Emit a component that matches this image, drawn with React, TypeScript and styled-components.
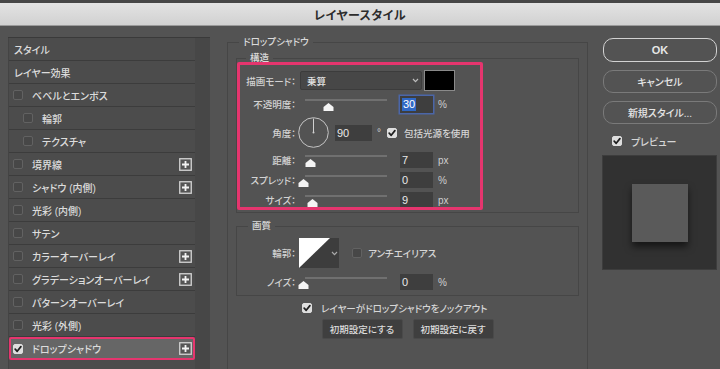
import React from "react";
import styled, { createGlobalStyle } from "styled-components";

const GlobalStyle = createGlobalStyle`
  html, body { margin: 0; padding: 0; background: #535353; }
  body {
    width: 720px; height: 369px; overflow: hidden;
    font-family: "Liberation Sans", "Noto Sans CJK JP", sans-serif;
    font-feature-settings: "palt";
  }
  * { box-sizing: border-box; }
`;

const Window = styled.div`
  width: 720px;
  height: 369px;
  display: flex;
  flex-direction: column;
  background: #535353;
  color: #d6d6d6;
  font-size: 9.5px;
  font-weight: 500;
`;

const TitleBar = styled.div`
  flex: none;
  height: 26px;
  border-top: 3px solid #474747;
  border-bottom: 1px solid #9a9a9a;
  background: linear-gradient(#e3e3e3, #d1d1d1);
  display: flex;
  align-items: center;
  justify-content: center;
  color: #2c2c2c;
  font-size: 12px;
  font-weight: 700;
  letter-spacing: 0.4px;
`;

const Body = styled.div`
  flex: 1;
  display: flex;
  padding: 11px 3px 0 8px;
  overflow: hidden;
`;

/* ---------- left effect list ---------- */

const LeftPanel = styled.div`
  width: 202px;
  flex: none;
  display: flex;
  border-top: 1px solid #3a3a3a;
`;

const List = styled.div`
  flex: 1;
  background: #4c4c4c;
  border-left: 1px solid #444;
`;

const Gutter = styled.div`
  width: 15px;
  background: #474747;
`;

const EffectRow = styled.div<{ $indent: number; $selected?: boolean }>`
  height: 23px;
  display: flex;
  align-items: center;
  gap: 9px;
  padding: 0 3px 0 ${(p) => p.$indent}px;
  border-bottom: 1px solid #3c3c3c;
  color: #dcdcdc;
  font-size: 10px;
  ${(p) =>
    p.$selected &&
    `
    background: #666;
    border: 2px solid #e5356e;
    border-radius: 2px;
    padding-left: ${p.$indent - 2}px;
    padding-right: 1px;
  `}
`;

const EffectLabel = styled.span`
  flex: 1;
  white-space: nowrap;
`;

const CheckBox = styled.span<{ $on?: boolean }>`
  width: 10px;
  height: 10px;
  flex: none;
  border-radius: 2px;
  display: inline-flex;
  align-items: center;
  justify-content: center;
  background: ${(p) => (p.$on ? "#dedede" : "#474747")};
  border: 1px solid ${(p) => (p.$on ? "#dedede" : "#626262")};
`;

const Check = ({ on }: { on?: boolean }) => (
  <CheckBox $on={on}>
    {on && (
      <svg width="8" height="8" viewBox="0 0 8 8">
        <path
          d="M1.2 4.2 L3.2 6.3 L6.9 1.6"
          fill="none"
          stroke="#1e1e1e"
          strokeWidth="1.7"
          strokeLinecap="round"
          strokeLinejoin="round"
        />
      </svg>
    )}
  </CheckBox>
);

const PlusIcon = () => (
  <svg width="13" height="13" viewBox="0 0 13 13">
    <rect x="0.75" y="0.75" width="11.5" height="11.5" fill="#555" stroke="#d4d4d4" strokeWidth="1.3" />
    <path d="M6.5 3 V10 M3 6.5 H10" stroke="#f2f2f2" strokeWidth="1.8" />
  </svg>
);

type Effect = {
  label: string;
  box?: boolean;
  indent?: boolean;
  plus?: boolean;
  selected?: boolean;
};

const effects: Effect[] = [
  { label: "スタイル" },
  { label: "レイヤー効果" },
  { label: "ベベルとエンボス", box: true },
  { label: "輪郭", box: true, indent: true },
  { label: "テクスチャ", box: true, indent: true },
  { label: "境界線", box: true, plus: true },
  { label: "シャドウ (内側)", box: true, plus: true },
  { label: "光彩 (内側)", box: true },
  { label: "サテン", box: true },
  { label: "カラーオーバーレイ", box: true, plus: true },
  { label: "グラデーションオーバーレイ", box: true, plus: true },
  { label: "パターンオーバーレイ", box: true },
  { label: "光彩 (外側)", box: true },
  { label: "ドロップシャドウ", box: true, plus: true, selected: true },
];

/* ---------- middle settings ---------- */

const Middle = styled.div`
  width: 361px;
  flex: none;
  margin: -2px 0 0 17px;
  display: flex;
  flex-direction: column;
`;

const Group = styled.fieldset<{ $open?: boolean; $mt?: number }>`
  margin: ${(p) => p.$mt ?? 0}px 0 0 0;
  padding: 0;
  min-width: 0;
  border: 1px solid #464646;
  ${(p) => p.$open && "border-bottom: none; flex: 1;"}
`;

const Legend = styled.legend<{ $indent: number }>`
  margin-left: ${(p) => p.$indent}px;
  padding: 0 4px;
  line-height: 14px;
  font-size: 9.5px;
  color: #dadada;
`;

const GroupBody = styled.div`
  padding: 2px 8px 0;
  display: flex;
  flex-direction: column;
`;

const SectionBody = styled.div<{ $pt: number; $pb: number }>`
  position: relative;
  display: flex;
  flex-direction: column;
  padding: ${(p) => p.$pt}px 0 ${(p) => p.$pb}px;
`;

const Highlight = styled.div`
  position: absolute;
  top: -3px;
  left: 0;
  width: 246px;
  height: 148px;
  border: 3px solid #e5356e;
  border-radius: 2px;
  pointer-events: none;
`;

const FormRow = styled.div<{ $mt: number; $h: number }>`
  display: flex;
  align-items: center;
  margin-top: ${(p) => p.$mt}px;
  height: ${(p) => p.$h}px;
`;

const FieldLabel = styled.span`
  width: 59px;
  flex: none;
  text-align: right;
  white-space: nowrap;
  color: #d2d2d2;
`;

const Select = styled.div`
  margin-left: 4px;
  width: 122px;
  height: 19px;
  background: #474747;
  border: 1px solid #3c3c3c;
  border-radius: 2px;
  display: flex;
  align-items: center;
  justify-content: space-between;
  padding: 0 2px 0 6px;
  color: #e2e2e2;
`;

const ColorSwatch = styled.div`
  margin-left: 2px;
  width: 31px;
  height: 21px;
  background: #000;
  border: 1px solid #8a8a8a;
`;

const SliderBox = styled.div`
  position: relative;
  width: 82px;
  height: 16px;
  margin-left: 9px;
  flex: none;
`;

const Track = styled.div`
  position: absolute;
  top: 3px;
  left: 0;
  right: 0;
  height: 2px;
  background: #707070;
`;

const ThumbWrap = styled.div`
  position: absolute;
  top: 7px;
  width: 11px;
  height: 8px;
  line-height: 0;
`;

const Slider = ({ at }: { at: number }) => (
  <SliderBox>
    <Track />
    <ThumbWrap style={{ left: at - 5.5 }}>
      <svg width="11" height="8" viewBox="0 0 11 8">
        <polygon points="5.5,0 10.5,4 10.5,8 0.5,8 0.5,4" fill="#f4f4f4" />
      </svg>
    </ThumbWrap>
  </SliderBox>
);

const NumField = styled.div<{ $ml: number; $w: number; $focus?: boolean }>`
  margin-left: ${(p) => p.$ml}px;
  width: ${(p) => p.$w}px;
  height: ${(p) => (p.$focus ? 17 : 16)}px;
  flex: none;
  background: #3e3e3e;
  display: flex;
  align-items: center;
  padding-left: 2px;
  font-size: 11px;
  font-weight: 400;
  color: #e8e8e8;
  ${(p) => p.$focus && "box-shadow: 0 0 0 1.5px #4b66a8;"}
`;

const Selected = styled.span`
  background: #3068c4;
  color: #fff;
  padding: 0 1px;
  line-height: 13px;
`;

const Unit = styled.span<{ $ml?: number }>`
  margin-left: ${(p) => p.$ml ?? 5}px;
  color: #cfcfcf;
  font-size: 10px;
  font-weight: 400;
`;

const Dial = styled.div`
  margin-left: 2px;
  width: 31px;
  height: 31px;
  flex: none;
  line-height: 0;
`;

const InlineText = styled.span<{ $ml: number }>`
  margin-left: ${(p) => p.$ml}px;
  white-space: nowrap;
  color: #d6d6d6;
`;

const Contour = styled.div`
  margin-left: 3px;
  display: flex;
  height: 30px;
  line-height: 0;
`;

const ContourArrow = styled.div`
  width: 9px;
  background: #3d3d3d;
  display: flex;
  align-items: center;
  justify-content: center;
`;

const CheckSlot = styled.span<{ $ml: number }>`
  margin-left: ${(p) => p.$ml}px;
  display: inline-flex;
`;

const KnockoutRow = styled.div`
  margin-top: 5px;
  height: 14px;
  display: flex;
  align-items: center;
  gap: 9px;
  padding-left: 66px;
  white-space: nowrap;
`;

const ButtonRow = styled.div`
  margin-top: 4px;
  display: flex;
  justify-content: center;
  gap: 10px;
`;

const FlatButton = styled.div`
  width: 81px;
  height: 20px;
  background: #3f3f3f;
  border: 1px solid #4a4a4a;
  border-radius: 2px;
  display: flex;
  align-items: center;
  justify-content: center;
  color: #dcdcdc;
`;

const Chevron = ({ color = "#bdbdbd" }: { color?: string }) => (
  <svg width="7" height="5" viewBox="0 0 7 5">
    <path d="M1 1 L3.5 3.6 L6 1" fill="none" stroke={color} strokeWidth="1.2" />
  </svg>
);

/* ---------- right column ---------- */

const Side = styled.div`
  width: 115px;
  flex: none;
  margin-left: 14px;
  display: flex;
  flex-direction: column;
`;

const PillButton = styled.div<{ $primary?: boolean; $mt: number }>`
  margin: ${(p) => p.$mt}px 0 0 1px;
  height: ${(p) => (p.$primary ? 24 : 23)}px;
  border-radius: 10px;
  border: ${(p) => (p.$primary ? "1.5px solid #d2d2d2" : "1px solid #7a7a7a")};
  display: flex;
  align-items: center;
  justify-content: center;
  color: #e6e6e6;
  font-size: ${(p) => (p.$primary ? "11px" : "10px")};
  font-weight: ${(p) => (p.$primary ? 700 : 500)};
`;

const PreviewToggle = styled.div`
  margin-top: 11px;
  height: 12px;
  padding-left: 10px;
  display: flex;
  align-items: center;
  gap: 9px;
  font-size: 10px;
`;

const PreviewBox = styled.div`
  margin-top: 8px;
  height: 115px;
  background: #313131;
  border: 1px solid #3d3d3d;
  display: flex;
  align-items: center;
  justify-content: center;
`;

const PreviewSquare = styled.div`
  width: 56px;
  height: 58px;
  background: #5a5a5a;
  box-shadow: 0 5px 7px rgba(0, 0, 0, 0.55);
`;

export default function App() {
  return (
    <>
      <GlobalStyle />
      <Window>
        <TitleBar>レイヤースタイル</TitleBar>
        <Body>
          <LeftPanel>
            <List>
              {effects.map((e) => (
                <EffectRow
                  key={e.label}
                  $indent={e.box ? (e.indent ? 14 : 4) : 5}
                  $selected={e.selected}
                >
                  {e.box && <Check on={e.selected} />}
                  <EffectLabel>{e.label}</EffectLabel>
                  {e.plus && <PlusIcon />}
                </EffectRow>
              ))}
            </List>
            <Gutter />
          </LeftPanel>

          <Middle>
            <Group $open>
              <Legend $indent={11}>ドロップシャドウ</Legend>
              <GroupBody>
                <Group>
                  <Legend $indent={9}>構造</Legend>
                  <SectionBody $pt={5} $pb={4}>
                    <Highlight />
                    <FormRow $mt={0} $h={21}>
                      <FieldLabel>描画モード：</FieldLabel>
                      <Select>
                        <span>乗算</span>
                        <Chevron />
                      </Select>
                      <ColorSwatch />
                    </FormRow>
                    <FormRow $mt={5} $h={16}>
                      <FieldLabel>不透明度：</FieldLabel>
                      <Slider at={23} />
                      <NumField $ml={13} $w={33} $focus>
                        <Selected>30</Selected>
                      </NumField>
                      <Unit>%</Unit>
                    </FormRow>
                    <FormRow $mt={5} $h={31}>
                      <FieldLabel>角度：</FieldLabel>
                      <Dial>
                        <svg width="31" height="31" viewBox="0 0 31 31">
                          <circle cx="15.5" cy="15.5" r="14.8" fill="none" stroke="#c4c4c4" strokeWidth="1" />
                          <line x1="15.5" y1="15.5" x2="15.5" y2="1.5" stroke="#d0d0d0" strokeWidth="1" />
                          <circle cx="15.5" cy="15.5" r="1" fill="#d0d0d0" />
                        </svg>
                      </Dial>
                      <NumField $ml={6} $w={37}>90</NumField>
                      <Unit $ml={5}>°</Unit>
                      <CheckSlot $ml={6}>
                        <Check on />
                      </CheckSlot>
                      <InlineText $ml={7}>包括光源を使用</InlineText>
                    </FormRow>
                    <FormRow $mt={4} $h={16}>
                      <FieldLabel>距離：</FieldLabel>
                      <Slider at={5} />
                      <NumField $ml={13} $w={33}>7</NumField>
                      <Unit>px</Unit>
                    </FormRow>
                    <FormRow $mt={4} $h={16}>
                      <FieldLabel>スプレッド：</FieldLabel>
                      <Slider at={-2} />
                      <NumField $ml={13} $w={33}>0</NumField>
                      <Unit>%</Unit>
                    </FormRow>
                    <FormRow $mt={4} $h={16}>
                      <FieldLabel>サイズ：</FieldLabel>
                      <Slider at={7} />
                      <NumField $ml={13} $w={33}>9</NumField>
                      <Unit>px</Unit>
                    </FormRow>
                  </SectionBody>
                </Group>

                <Group $mt={6}>
                  <Legend $indent={11}>画質</Legend>
                  <SectionBody $pt={0} $pb={5}>
                    <FormRow $mt={5} $h={30}>
                      <FieldLabel>輪郭：</FieldLabel>
                      <Contour>
                        <svg width="31" height="30" viewBox="0 0 31 30">
                          <rect width="31" height="30" fill="#3d3d3d" />
                          <polygon points="0,0 31,0 0,30" fill="#ffffff" />
                        </svg>
                        <ContourArrow>
                          <Chevron color="#aaaaaa" />
                        </ContourArrow>
                      </Contour>
                      <CheckSlot $ml={13}>
                        <Check />
                      </CheckSlot>
                      <InlineText $ml={6}>アンチエイリアス</InlineText>
                    </FormRow>
                    <FormRow $mt={6} $h={16}>
                      <FieldLabel>ノイズ：</FieldLabel>
                      <Slider at={-2} />
                      <NumField $ml={13} $w={33}>0</NumField>
                      <Unit>%</Unit>
                    </FormRow>
                  </SectionBody>
                </Group>

                <KnockoutRow>
                  <Check on />
                  <span>レイヤーがドロップシャドウをノックアウト</span>
                </KnockoutRow>
                <ButtonRow>
                  <FlatButton>初期設定にする</FlatButton>
                  <FlatButton>初期設定に戻す</FlatButton>
                </ButtonRow>
              </GroupBody>
            </Group>
          </Middle>

          <Side>
            <PillButton $primary $mt={1}>OK</PillButton>
            <PillButton $mt={8}>キャンセル</PillButton>
            <PillButton $mt={8}>新規スタイル...</PillButton>
            <PreviewToggle>
              <Check on />
              <span>プレビュー</span>
            </PreviewToggle>
            <PreviewBox>
              <PreviewSquare />
            </PreviewBox>
          </Side>
        </Body>
      </Window>
    </>
  );
}
